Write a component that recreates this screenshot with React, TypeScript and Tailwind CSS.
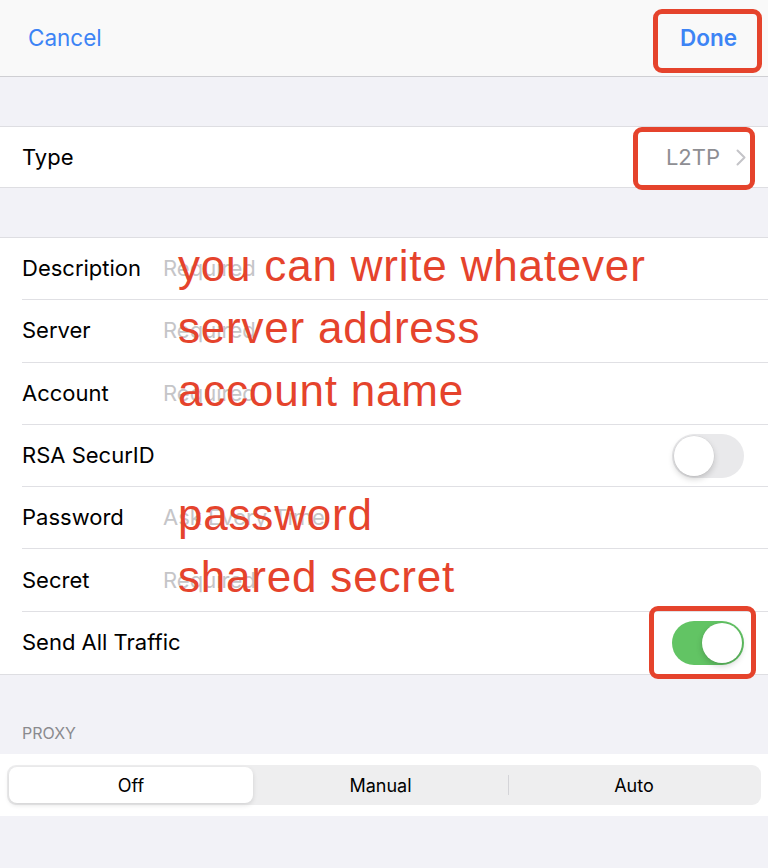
import type { ReactNode } from 'react';

const RED = 'border-[#e5432c]';

function Toggle({ on }: { on: boolean }) {
  return (
    <div
      className={`relative w-[72px] h-[44px] rounded-full ${on ? 'bg-[#62c464]' : 'bg-[#e9e9eb]'}`}
    >
      <div
        className={`absolute top-[2px] w-[40px] h-[40px] rounded-full bg-white shadow-[0_3px_6px_rgba(0,0,0,0.18),0_0_0_0.5px_rgba(0,0,0,0.06)] ${on ? 'right-[2px]' : 'left-[2px]'}`}
      />
    </div>
  );
}

function Row({
  label,
  placeholder,
  note,
  right,
  last,
}: {
  label: string;
  placeholder?: string;
  note?: string;
  right?: ReactNode;
  last?: boolean;
}) {
  return (
    <div className="relative h-[62.3px] pl-[22px] flex">
      <div
        className={`flex-1 flex items-center pr-[24px] ${last ? '' : 'border-b border-[#e0e0e4]'}`}
      >
        <span className="min-w-[141px] whitespace-nowrap text-[22px] text-black">{label}</span>
        {placeholder && <span className="text-[22px] text-[#c5c5c8]">{placeholder}</span>}
        <div className="ml-auto">{right}</div>
      </div>
      {note && (
        <span className="absolute left-[178px] top-[3px] whitespace-nowrap text-[44px] leading-[50px] tracking-[0.8px] text-[#e5432c] font-['Liberation_Sans',Arial,sans-serif]">
          {note}
        </span>
      )}
    </div>
  );
}

export default function App() {
  return (
    <div className="relative w-[768px] h-[868px] overflow-hidden bg-[#f2f2f7] font-['Inter','Noto_Sans',sans-serif]">
      {/* nav bar */}
      <div className="h-[77px] bg-[#f9f9f9] border-b border-[#cfcfd3] flex items-center justify-between pl-[28px] pr-[31px]">
        <span className="text-[22.5px] text-[#3d84f5]">Cancel</span>
        <span className="text-[22.5px] font-semibold text-[#3d84f5]">Done</span>
      </div>

      <div className="h-[49px]" />

      {/* type */}
      <div className="h-[62px] bg-white border-y border-[#dedee2] flex items-center pl-[22px] pr-[22px]">
        <span className="text-[22px] text-black">Type</span>
        <span className="ml-auto text-[22px] text-[#8e8e93]">L2TP</span>
        <svg className="ml-[16px] w-[10px] h-[17px]" viewBox="0 0 10 17" fill="none">
          <path d="M1.5 1.5 L8.5 8.5 L1.5 15.5" stroke="#c4c4c8" strokeWidth="2" strokeLinecap="round" strokeLinejoin="round" />
        </svg>
      </div>

      <div className="h-[49px]" />

      {/* config rows */}
      <div className="bg-white border-y border-[#dedee2]">
        <Row label="Description" placeholder="Required" note="you can write whatever" />
        <Row label="Server" placeholder="Required" note="server address" />
        <Row label="Account" placeholder="Required" note="account name" />
        <Row label="RSA SecurID" right={<Toggle on={false} />} />
        <Row label="Password" placeholder="Ask Every Time" note="password" />
        <Row label="Secret" placeholder="Required" note="shared secret" />
        <Row label="Send All Traffic" right={<Toggle on />} last />
      </div>

      {/* proxy */}
      <div className="h-[79px] flex items-end pl-[22px] pb-[9px]">
        <span className="text-[16px] text-[#8a8a8e]">PROXY</span>
      </div>
      <div className="h-[62px] bg-white px-[7px] py-[11px]">
        <div className="h-[40px] rounded-[9px] bg-[#eeeeef] p-[2px] flex items-center">
          <div className="w-[244px] h-[36px] rounded-[8px] bg-white shadow-[0_2px_5px_rgba(0,0,0,0.12)] flex items-center justify-center text-[18px] text-black">
            Off
          </div>
          <div className="flex-1 flex items-center justify-center text-[18px] text-black">Manual</div>
          <div className="w-px h-[20px] bg-[#d4d4d8]" />
          <div className="w-[250px] flex items-center justify-center text-[18px] text-black">Auto</div>
        </div>
      </div>

      {/* annotation boxes */}
      <div className={`absolute left-[653px] top-[9px] w-[109px] h-[64px] border-[5px] ${RED} rounded-[9px]`} />
      <div className={`absolute left-[633px] top-[127px] w-[122px] h-[63px] border-[5px] ${RED} rounded-[9px]`} />
      <div className={`absolute left-[649px] top-[606px] w-[107px] h-[73px] border-[5px] ${RED} rounded-[9px]`} />
    </div>
  );
}
